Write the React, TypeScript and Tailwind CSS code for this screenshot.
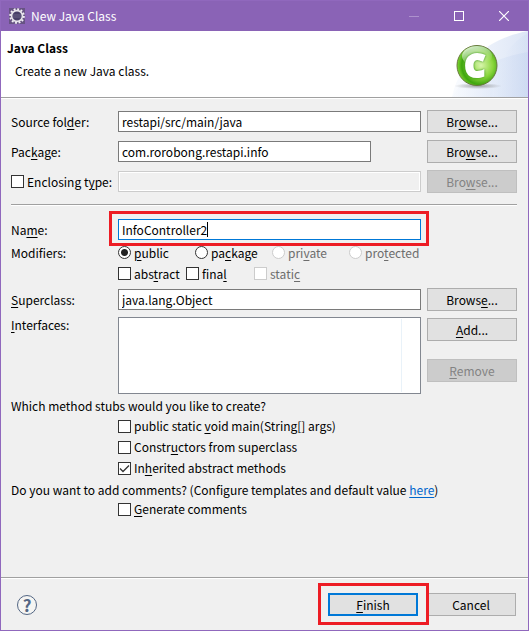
import { useState } from 'react';
import type { ReactNode } from 'react';

const field = 'h-[21px] w-full min-w-0 border border-[#7a7a7a] bg-white px-[3px] text-black outline-none';

type ButtonProps = { children: ReactNode; disabled?: boolean; primary?: boolean };

function Button({ children, disabled, primary }: ButtonProps) {
  const look = disabled
    ? 'border border-[#bfbfbf] bg-[#cccccc] text-[#838383]'
    : primary
      ? 'border-2 border-[#0078d7] bg-[#e1e1e1]'
      : 'border border-[#adadad] bg-[#e1e1e1]';
  return (
    <button
      type="button"
      disabled={disabled}
      className={`flex h-[23px] w-[90px] shrink-0 items-center justify-center ${look}`}
    >
      <span>{children}</span>
    </button>
  );
}

type CheckProps = { children: ReactNode; disabled?: boolean; defaultChecked?: boolean };

function Check({ children, disabled, defaultChecked }: CheckProps) {
  return (
    <label className={`flex items-center gap-[3px] whitespace-nowrap ${disabled ? 'text-[#6d6d6d]' : ''}`}>
      <span className="grid h-[13px] w-[13px] shrink-0">
        <input
          type="checkbox"
          disabled={disabled}
          defaultChecked={defaultChecked}
          className="peer col-start-1 row-start-1 h-[13px] w-[13px] appearance-none border border-[#333333] bg-white disabled:border-[#cccccc]"
        />
        <svg
          viewBox="0 0 13 13"
          className="pointer-events-none invisible col-start-1 row-start-1 h-[13px] w-[13px] peer-checked:visible"
        >
          <path d="M2 6.5 L5 9.500 L11 3.500" fill="none" stroke="#333" strokeWidth="1.3" />
        </svg>
      </span>
      <span>{children}</span>
    </label>
  );
}

function Radio({ children, disabled, defaultChecked }: CheckProps) {
  return (
    <label className={`flex w-[77px] items-center gap-[3px] whitespace-nowrap ${disabled ? 'text-[#6d6d6d]' : ''}`}>
      <input
        type="radio"
        name="visibility"
        disabled={disabled}
        defaultChecked={defaultChecked}
        className="h-[13px] w-[13px] shrink-0 appearance-none rounded-full border border-[#333333] bg-white checked:bg-[radial-gradient(circle,#222222_3px,#ffffff_4px)] disabled:border-[#cccccc]"
      />
      <span>{children}</span>
    </label>
  );
}

function Key({ children }: { children: string }) {
  return <u className="underline-offset-2">{children}</u>;
}

function GearIcon() {
  return (
    <svg viewBox="0 0 16 16" className="h-4 w-4">
      <rect width="16" height="16" fill="#675384" />
      <circle cx="8" cy="8" r="6.800" fill="none" stroke="#f2eff5" strokeWidth="2" strokeDasharray="1.9 1.660" />
      <circle cx="8" cy="8" r="5.400" fill="#473d68" stroke="#e8e4ec" strokeWidth="1.6" />
      <path d="M4 7 H12 M4 9 H12" stroke="#6a6286" strokeWidth="1" />
    </svg>
  );
}

function ClassBanner() {
  return (
    <svg viewBox="0 0 76 66" className="h-[66px] w-[76px] shrink-0">
      <defs>
        <linearGradient id="sky" x1="0" x2="1">
          <stop offset="0" stopColor="#f6f9fe" />
          <stop offset="1" stopColor="#c6d5f0" />
        </linearGradient>
        <radialGradient id="ball" cx="0.6" cy="0.5" r="0.6">
          <stop offset="0" stopColor="#d8f5ac" />
          <stop offset="0.5" stopColor="#8ad63c" />
          <stop offset="0.8" stopColor="#3fa50f" />
          <stop offset="1" stopColor="#82d832" />
        </radialGradient>
        <linearGradient id="shine" x1="0" y1="0" x2="0.5" y2="1">
          <stop offset="0" stopColor="#ffffff" stopOpacity="0.9" />
          <stop offset="1" stopColor="#ffffff" stopOpacity="0" />
        </linearGradient>
        <radialGradient id="shade">
          <stop offset="0" stopColor="#777777" stopOpacity="0.65" />
          <stop offset="1" stopColor="#777777" stopOpacity="0" />
        </radialGradient>
      </defs>
      <path d="M0 66 C6 34 34 8 76 0 V66 Z" fill="url(#sky)" opacity="0.6" />
      <path d="M40 66 C42 38 54 14 76 2 V66 Z" fill="url(#sky)" opacity="0.3" />
      <path d="M0 66 C14 42 44 26 76 21 V66 Z" fill="url(#sky)" opacity="0.5" />
      <ellipse cx="26" cy="55" rx="24" ry="3" fill="url(#shade)" />
      <circle cx="25" cy="34.500" r="20" fill="url(#ball)" stroke="#68783e" />
      <ellipse cx="25" cy="25" rx="15" ry="10" fill="url(#shine)" />
      <text
        x="23"
        y="46"
        textAnchor="middle"
        fontFamily="Open Sans, sans-serif"
        fontWeight="800"
        fontSize="32"
        fill="#ffffff"
        stroke="#ffffff"
        strokeWidth="2"
        className="drop-shadow-[0_0_1px_#2c8a12]"
      >
        C
      </text>
    </svg>
  );
}

export default function App() {
  const [name, setName] = useState('InfoController2');

  return (
    <div className="flex min-h-screen flex-col border border-[#9068bd] bg-[#f0f0f0] font-['Noto_Sans_CJK_KR','Noto_Sans',sans-serif] text-[12px] leading-4 text-black">
      <header className="flex h-[30px] items-center bg-[#8a63b6] pr-px pl-2 text-white">
        <GearIcon />
        <h1 className="ml-[6px] flex-1">New Java Class</h1>
        <button type="button" aria-label="Minimize" disabled className="flex h-full w-[46px] items-center justify-center">
          <span className="h-px w-[10px] bg-[#ad91cd]" />
        </button>
        <button type="button" aria-label="Maximize" className="flex h-full w-[44px] items-center justify-center">
          <span className="h-[10px] w-[10px] border border-white" />
        </button>
        <button type="button" aria-label="Close" className="flex h-full w-[46px] items-center justify-center">
          <svg viewBox="0 0 10 10" className="h-[10px] w-[10px]">
            <path d="M0 0 L10 10 M10 0 L0 10" stroke="#ffffff" strokeWidth="1.2" />
          </svg>
        </button>
      </header>

      <section className="flex justify-between bg-white">
        <div className="pt-[9px] pl-[6px]">
          <h2 className="font-bold">Java Class</h2>
          <p className="mt-[7px] pl-2">Create a new Java class.</p>
        </div>
        <ClassBanner />
      </section>
      <div className="h-[2px] border-t border-[#a0a0a0] bg-white" />

      <main className="flex-1 pt-[11px] pr-[11px] pl-[10px]">
        <div className="grid grid-cols-[101px_1fr_90px] items-center gap-x-[6px] gap-y-[7px]">
          <label htmlFor="source">
            Source fol<Key>d</Key>er:
          </label>
          <input id="source" className={field} defaultValue="restapi/src/main/java" />
          <Button>
            Br<Key>o</Key>wse...
          </Button>

          <label htmlFor="package">
            Pac<Key>k</Key>age:
          </label>
          <div className="pr-[50px]">
            <input id="package" className={field} defaultValue="com.rorobong.restapi.info" />
          </div>
          <Button>
            Bro<Key>w</Key>se...
          </Button>

          <Check>
            Enclosing t<Key>y</Key>pe:
          </Check>
          <input
            aria-label="Enclosing type"
            disabled
            className="h-[21px] w-full min-w-0 border border-[#cccccc] bg-[#f0f0f0] shadow-[inset_0_0_0_1px_#ffffff]"
          />
          <Button disabled>
            Bro<Key>w</Key>se...
          </Button>
        </div>

        <div className="mt-[11px] h-[2px] border-t border-[#a0a0a0] bg-white" />

        <div className="mt-[13px] grid grid-cols-[101px_1fr_90px] items-center gap-x-[6px]">
          <label htmlFor="name">
            Na<Key>m</Key>e:
          </label>
          <div className="relative h-[21px]">
            <input
              id="name"
              className="h-[21px] w-full min-w-0 border border-[#0078d7] bg-white px-[3px] outline-none"
              value={name}
              onChange={(e) => setName(e.target.value)}
            />
            <span className="absolute top-[3px] left-[89px] h-[15px] w-px bg-black" />
            <span className="pointer-events-none absolute -top-2 -right-2 -bottom-[6px] -left-[9px] z-10 border-3 border-[#ed1c24]" />
          </div>
        </div>

        <div className="mt-[2px] grid grid-cols-[107px_1fr] items-center">
          <span>Modifiers:</span>
          <div className="flex h-[21px] items-center">
            <Radio defaultChecked>
              <Key>p</Key>ublic
            </Radio>
            <Radio>
              pa<Key>c</Key>kage
            </Radio>
            <Radio disabled>
              pri<Key>v</Key>ate
            </Radio>
            <Radio disabled>
              pro<Key>t</Key>ected
            </Radio>
          </div>
          <div className="col-start-2 flex h-[21px] items-center">
            <div className="w-[68px]">
              <Check>
                abs<Key>t</Key>ract
              </Check>
            </div>
            <div className="w-[68px]">
              <Check>
                fina<Key>l</Key>
              </Check>
            </div>
            <Check disabled>
              stati<Key>c</Key>
            </Check>
          </div>
        </div>

        <div className="mt-1 grid grid-cols-[101px_1fr_90px] items-center gap-x-[6px] gap-y-[6px]">
          <label htmlFor="superclass">
            <Key>S</Key>uperclass:
          </label>
          <input id="superclass" className={field} defaultValue="java.lang.Object" />
          <Button>
            Brows<Key>e</Key>...
          </Button>

          <span className="self-start">
            <Key>I</Key>nterfaces:
          </span>
          <div className="flex h-[77px] justify-end border border-[#828790] bg-white py-px">
            <div className="w-[19px] border-l border-[#e9f2f9]" />
          </div>
          <div className="flex flex-col gap-[18px] self-start pt-px">
            <Button>
              <Key>A</Key>dd...
            </Button>
            <Button disabled>
              <Key>R</Key>emove
            </Button>
          </div>
        </div>

        <p className="mt-[2px] pb-[2px] leading-5">Which method stubs would you like to create?</p>
        <div className="flex flex-col gap-[5px] pl-[107px]">
          <Check>
            public static <Key>v</Key>oid main(String[] args)
          </Check>
          <Check>
            Constr<Key>u</Key>ctors from superclass
          </Check>
          <Check defaultChecked>
            In<Key>h</Key>erited abstract methods
          </Check>
        </div>
        <p className="mt-1 pb-px leading-5">
          Do you want to add comments? (Configure templates and default value{' '}
          <a href="#templates" className="text-[#0066cc] underline underline-offset-2">
            here
          </a>
          )
        </p>
        <div className="pl-[107px]">
          <Check>
            <Key>G</Key>enerate comments
          </Check>
        </div>
      </main>

      <div className="h-[2px] border-t border-[#a0a0a0] bg-white" />
      <footer className="flex h-[51px] items-center justify-between pr-3 pl-4">
        <button
          type="button"
          aria-label="Help"
          className="flex h-5 w-5 items-center justify-center rounded-full border border-[#536684] bg-[#f5f5f3] text-[17px] font-bold text-[#536684]"
        >
          ?
        </button>
        <div className="flex gap-2">
          <div className="relative">
            <Button primary>
              <Key>F</Key>inish
            </Button>
            <span className="pointer-events-none absolute -top-[10px] -right-[11px] -bottom-[9px] -left-[10px] z-10 border-3 border-[#ed1c24]" />
          </div>
          <Button>Cancel</Button>
        </div>
      </footer>
    </div>
  );
}
